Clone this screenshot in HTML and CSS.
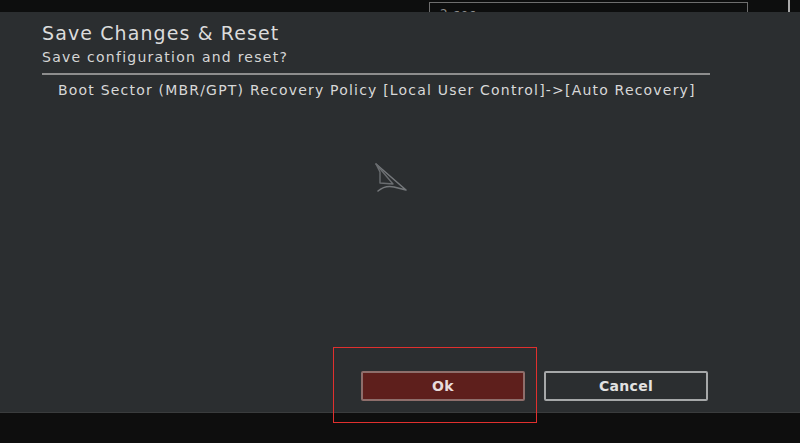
FILE: index.html
```html
<!DOCTYPE html>
<html>
<head>
<meta charset="utf-8">
<link rel="stylesheet" href="styles.css">
</head>
<body>
<div class="screen">
  <div class="topbar">
    <div class="timebox"><span class="timetext">2 sec</span></div>
    <div class="scrollmark"></div>
  </div>
  <div class="panel">
    <div class="head">
      <div class="title">Save Changes &amp; Reset</div>
      <div class="subtitle">Save configuration and reset?</div>
    </div>
    <div class="rule"></div>
    <div class="changes">
      <div class="change">Boot Sector (MBR/GPT) Recovery Policy [Local User Control]-&gt;[Auto Recovery]</div>
    </div>
    <div class="actions">
      <div class="btn ok">Ok</div>
      <div class="btn cancel">Cancel</div>
    </div>
    <div class="highlight"></div>
    <svg class="cursor" width="48" height="40" viewBox="0 0 48 40">
      <path d="M8 6 L38 32 L26 29 Q17 27 10 33" fill="none" stroke="#74777a" stroke-width="1.6" stroke-linejoin="round" stroke-linecap="round"/>
      <path d="M8 6 L12 14 L12 25 L25 26 Z" fill="none" stroke="#6a6d70" stroke-width="1.4" stroke-linejoin="round"/>
    </svg>
  </div>
  <div class="bottombar"></div>
</div>
</body>
</html>
```
FILE: styles.css
```css
html, body {
  margin: 0;
  padding: 0;
  background: #0e0e0e;
}
.screen {
  width: 800px;
  height: 443px;
  overflow: hidden;
  display: flex;
  flex-direction: column;
  font-family: "DejaVu Sans", "Open Sans", sans-serif;
}
.topbar {
  height: 12px;
  flex: none;
  background: #0d0e0e;
  display: flex;
  align-items: flex-end;
  position: relative;
}
.timebox {
  margin-left: 429px;
  width: 317px;
  height: 9px;
  border: 1px solid #6e6e6e;
  border-bottom: none;
  overflow: hidden;
}
.timetext {
  display: block;
  margin: 5px 0 0 10px;
  color: #8a8a8a;
  font-size: 12px;
  line-height: 12px;
  letter-spacing: 1px;
}
.scrollmark {
  margin-left: 40px;
  width: 2px;
  height: 12px;
  background: #a9a9a9;
}
.panel {
  height: 401px;
  flex: none;
  background: #2b2e30;
  border-bottom: 1px solid #3a3c3d;
  position: relative;
  display: flex;
  flex-direction: column;
  padding: 0 0 0 42px;
  box-sizing: border-box;
}
.head {
  padding-top: 8px;
}
.title {
  color: #dcdcdc;
  font-size: 19px;
  line-height: 26px;
  letter-spacing: 1.1px;
}
.subtitle {
  margin-top: 1px;
  color: #d6d6d6;
  font-size: 14px;
  line-height: 20px;
  letter-spacing: 1.25px;
}
.rule {
  margin-top: 6px;
  width: 668px;
  height: 2px;
  background: #8d8d8d;
}
.changes {
  padding: 5px 0 0 16px;
  flex: 1;
}
.change {
  color: #d8d8d8;
  font-size: 14px;
  line-height: 20px;
  letter-spacing: 1.2px;
}
.actions {
  display: flex;
  gap: 19px;
  padding-left: 319px;
  margin-bottom: 11px;
}
.btn {
  width: 164px;
  height: 30px;
  box-sizing: border-box;
  border: 2px solid;
  border-radius: 2px;
  display: flex;
  align-items: center;
  justify-content: center;
  color: #e2e2e2;
  font-size: 14px;
  font-weight: bold;
  letter-spacing: 0.3px;
}
.ok {
  background: #5e1f1c;
  border-color: #8e6e6b;
  color: #e8dcdc;
}
.cancel {
  background: #2b2e30;
  border-color: #a6a8a9;
}
.highlight {
  position: absolute;
  left: 333px;
  top: 335px;
  width: 202px;
  height: 74px;
  border: 1px solid #e0302e;
  z-index: 2;
}
.cursor {
  position: absolute;
  left: 368px;
  top: 146px;
}
.bottombar {
  flex: 1;
  background: #0e0e0e;
}
```
